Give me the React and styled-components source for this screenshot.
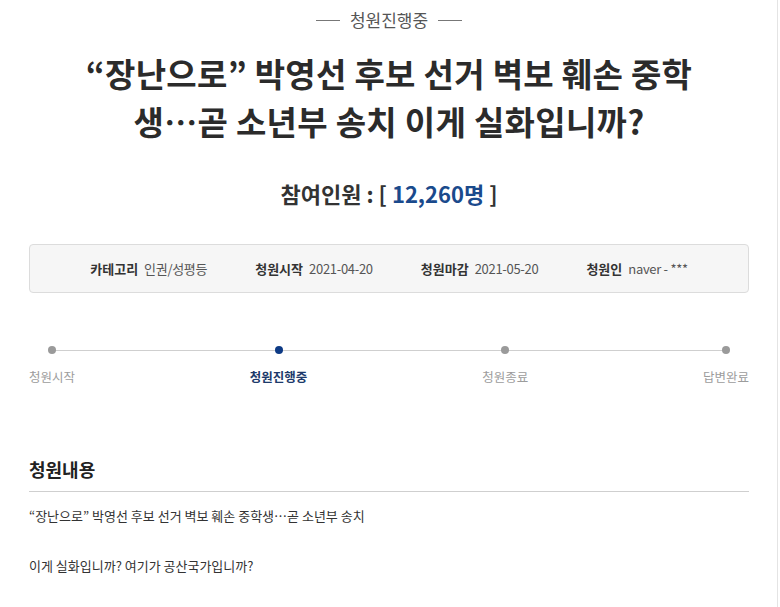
import styled, { createGlobalStyle } from 'styled-components';

const steps = [
  { label: '청원시작' },
  { label: '청원진행중', active: true },
  { label: '청원종료' },
  { label: '답변완료' },
];

const info = [
  { label: '카테고리', value: '인권/성평등' },
  { label: '청원시작', value: '2021-04-20' },
  { label: '청원마감', value: '2021-05-20' },
  { label: '청원인', value: 'naver - ***' },
];

function App() {
  return (
    <Page>
      <GlobalStyle />
      <Inner>
        <StatusTag>청원진행중</StatusTag>
        <Title>“장난으로” 박영선 후보 선거 벽보 훼손 중학생…곧 소년부 송치 이게 실화입니까?</Title>
        <Count>
          참여인원 : [ <CountNumber>12,260명</CountNumber> ]
        </Count>
        <InfoBox>
          {info.map(item => (
            <InfoItem key={item.label}>
              <InfoLabel>{item.label}</InfoLabel>
              <InfoValue>{item.value}</InfoValue>
            </InfoItem>
          ))}
        </InfoBox>
        <Progress>
          {steps.map(step => (
            <Step key={step.label}>
              <Dot active={step.active} />
              <StepLabel active={step.active}>{step.label}</StepLabel>
            </Step>
          ))}
        </Progress>
        <SectionTitle>청원내용</SectionTitle>
        <Body>
          “장난으로” 박영선 후보 선거 벽보 훼손 중학생…곧 소년부 송치
          <br />
          <br />
          이게 실화입니까? 여기가 공산국가입니까?
        </Body>
      </Inner>
    </Page>
  );
}

const GlobalStyle = createGlobalStyle`
  body {
    margin: 0;
    background: #fff;
    font-family: "Noto Sans CJK KR", "Noto Sans", sans-serif;
    color: #333;
  }
`;
const Page = styled.div`
  width: 778px;
  min-height: 100vh;
  border-right: 1px solid #e4e4e4;
  box-sizing: border-box;
`;
const Inner = styled.div`
  width: 720px;
  margin-left: 29px;
  padding-top: 10px;
`;
const StatusTag = styled.div`
  display: flex;
  align-items: center;
  justify-content: center;
  gap: 10px;
  font-size: 17px;
  line-height: 20px;
  color: #555;

  &::before,
  &::after {
    content: '';
    width: 24px;
    height: 1px;
    background: #777;
  }
`;
const Title = styled.h1`
  max-width: 640px;
  margin: 19px auto 0;
  font-size: 33px;
  line-height: 48px;
  font-weight: 700;
  color: #2b2b2b;
  text-align: center;
  letter-spacing: 0.3px;
`;
const Count = styled.div`
  margin-top: 33px;
  font-size: 22px;
  line-height: 30px;
  font-weight: 700;
  text-align: center;
  color: #333;
`;
const CountNumber = styled.span`
  color: #1a4a8c;
`;
const InfoBox = styled.div`
  margin-top: 36px;
  height: 47px;
  display: flex;
  align-items: center;
  justify-content: center;
  gap: 48px;
  background: #f6f6f6;
  border: 1px solid #dcdcdc;
  border-radius: 4px;
`;
const InfoItem = styled.div`
  display: flex;
  align-items: center;
  gap: 6px;
  font-size: 13px;
`;
const InfoLabel = styled.span`
  font-weight: 700;
  color: #333;
`;
const InfoValue = styled.span`
  color: #555;
  letter-spacing: -0.3px;
`;
const Progress = styled.div`
  position: relative;
  margin-top: 53px;
  display: flex;
  justify-content: space-between;

  &::before {
    content: '';
    position: absolute;
    top: 4px;
    left: 24px;
    right: 24px;
    height: 1px;
    background: #cfcfcf;
  }
`;
const Step = styled.div`
  display: flex;
  flex-direction: column;
  align-items: center;
  gap: 14px;
`;
const Dot = styled.span`
  position: relative;
  width: 8px;
  height: 8px;
  border-radius: 50%;
  background: ${props => props.active ? '#0d3a85' : '#9a9a9a'};
`;
const StepLabel = styled.span`
  font-size: 12.5px;
  line-height: 18px;
  color: ${props => props.active ? '#1d3a6b' : '#9c9c9c'};
  font-weight: ${props => props.active ? 700 : 400};
`;
const SectionTitle = styled.h2`
  margin: 71px 0 0;
  padding-bottom: 10px;
  border-bottom: 1px solid #cfcfcf;
  font-size: 18px;
  line-height: 24px;
  font-weight: 700;
  color: #222;
`;
const Body = styled.p`
  margin: 11px 0 0;
  font-size: 13px;
  line-height: 25px;
  color: #333;
`;

export default App;
